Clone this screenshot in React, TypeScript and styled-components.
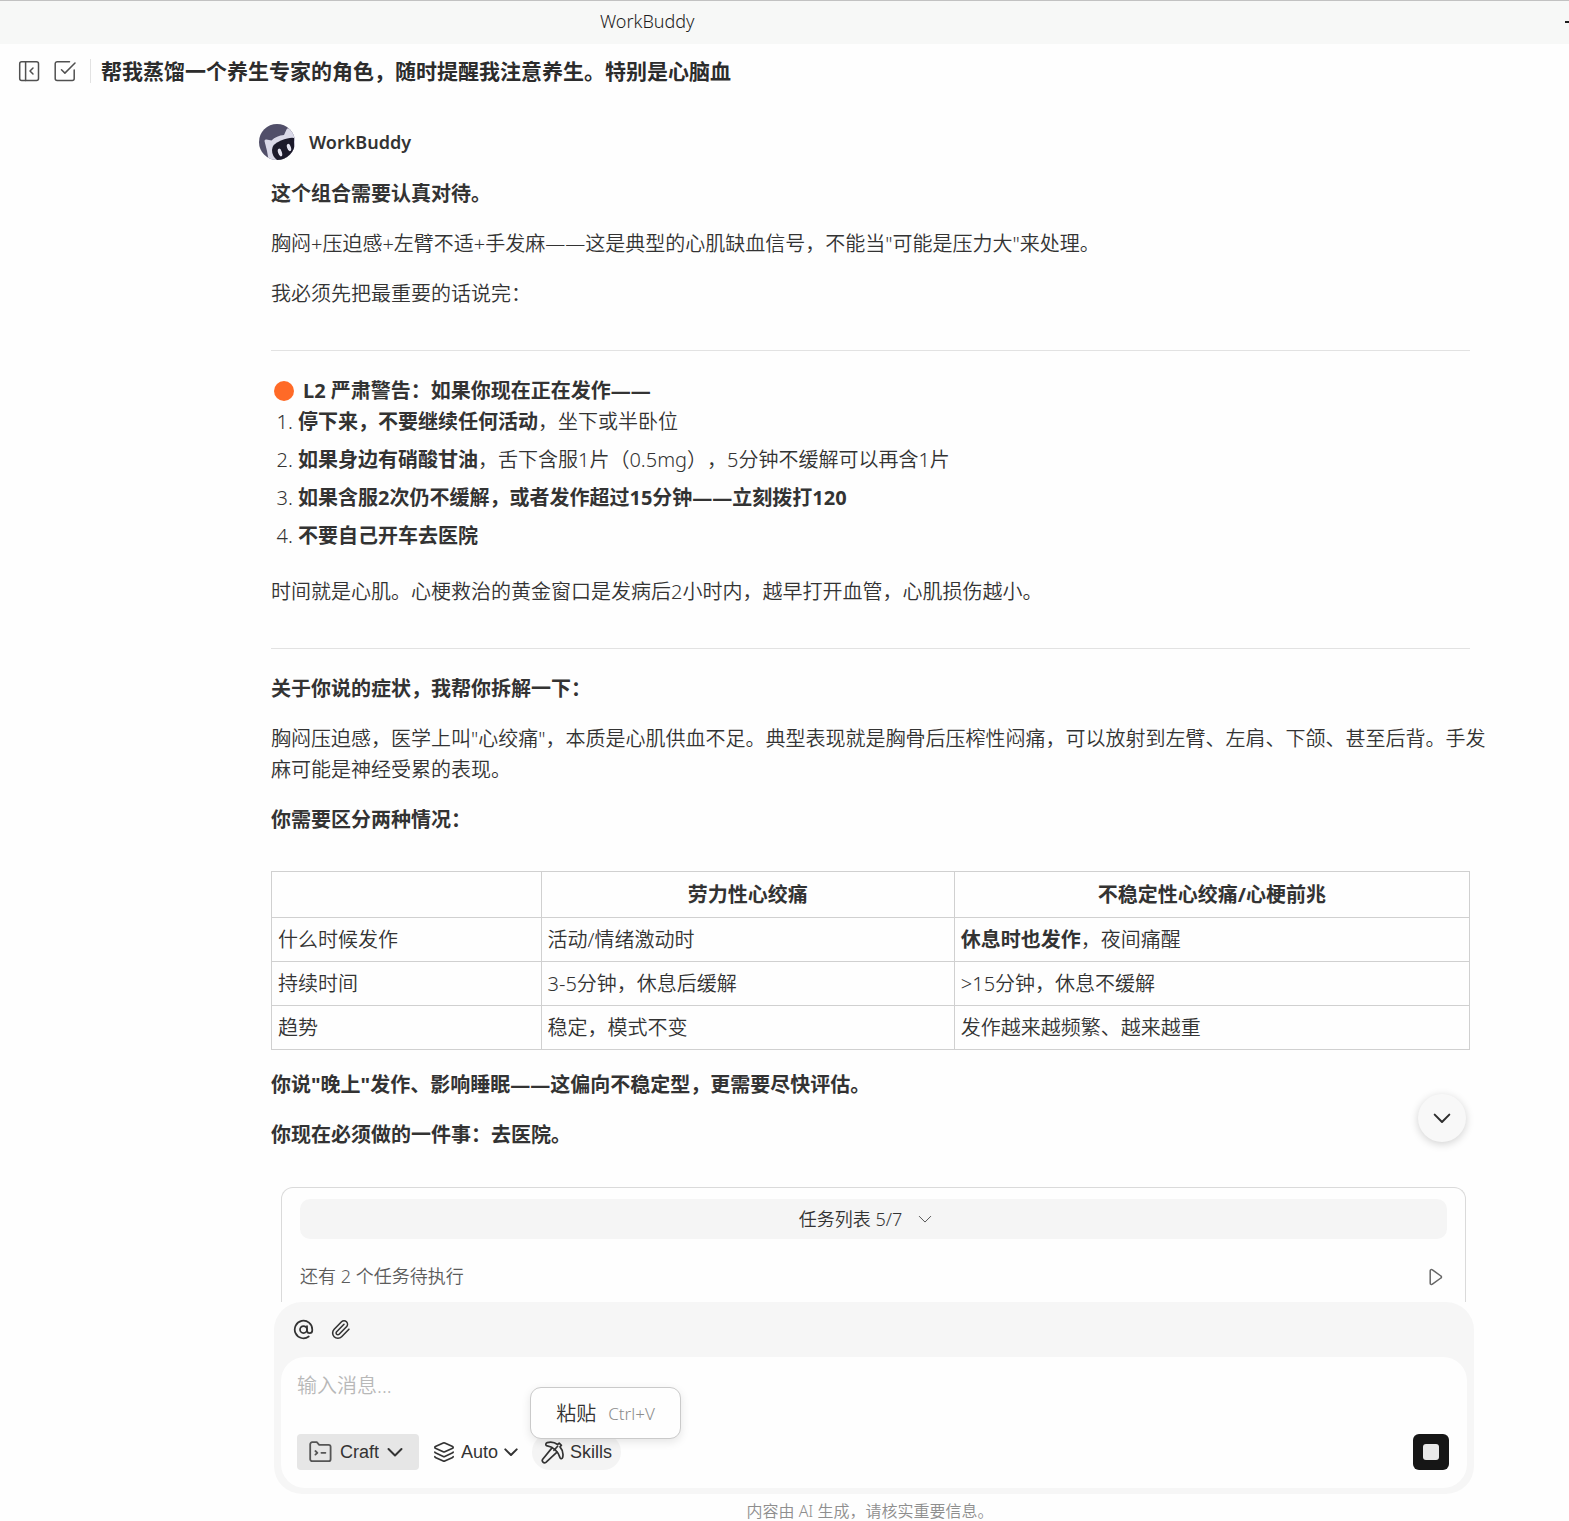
import React from "react";
import styled, { createGlobalStyle } from "styled-components";
import { AtSign, Layers, Paperclip } from "lucide-react";

const GlobalStyle = createGlobalStyle`
  *, *::before, *::after { box-sizing: border-box; }
  body {
    margin: 0;
    background: #fefefe;
    color: #333;
    font-family: "Noto Sans", "Noto Sans CJK SC", sans-serif;
    font-size: 20px;
    font-weight: 350;
    line-height: 31px;
    text-spacing-trim: space-all;
  }
  button, select, textarea { font: inherit; color: inherit; }
  button { border: 0; padding: 0; background: none; cursor: pointer; }
  p, h1, h2, ol { margin: 0; }
`;

const Page = styled.div`
  display: flex;
  flex-direction: column;
  min-height: 100vh;
`;

const TitleBar = styled.header`
  display: flex;
  align-items: center;
  justify-content: space-between;
  height: 44px;
  padding: 0 0 2px 600px;
  border-top: 1px solid #c2c2c2;
  background: #f7f8f7;
  color: #1e1e1e;
  font-size: 18px;
  overflow: hidden;
`;

const MinimizeButton = styled.button`
  width: 4px;
  height: 2px;
  background: #1e1e1e;
`;

const Toolbar = styled.div`
  display: flex;
  align-items: center;
  height: 54px;
  padding-left: 18px;
`;

const ToolButton = styled.button`
  display: flex;
  width: 22px;
  height: 22px;
  margin-right: 14px;
  color: #505050;
`;

const ChatTitle = styled.h1`
  padding-left: 10px;
  border-left: 1px solid #e2e2e2;
  color: #2c2c2c;
  font-size: 21px;
  font-weight: 700;
  line-height: 24px;
`;

const Conversation = styled.main`
  position: relative;
  flex: 1;
  padding: 26px 99px 18px 271px;
`;

const Sender = styled.div`
  display: flex;
  align-items: center;
  gap: 14px;
  height: 36px;
  margin: 0 0 18px -12px;
`;

const SenderName = styled.h2`
  font-size: 18px;
  font-weight: 600;
`;

const Paragraph = styled.p<{ $strong?: boolean }>`
  margin: 0 -16px 19px 0;
  font-weight: ${(p) => (p.$strong ? 700 : 350)};
`;

const Divider = styled.hr`
  height: 1px;
  margin: 41px 0 24px;
  border: 0;
  background: #e2e2e2;
`;

const Warning = styled.p`
  display: flex;
  align-items: center;
  gap: 9px;
  padding-left: 3px;
  font-weight: 700;
`;

const AlertDot = styled.span`
  width: 20px;
  height: 20px;
  border-radius: 50%;
  background: #ff6a27;
`;

const Steps = styled.ol`
  display: flex;
  flex-direction: column;
  gap: 7px;
  padding: 0 0 25px 27px;
  strong { font-weight: 700; }
`;

const Compare = styled.table`
  width: 100%;
  margin: 36px 0 19px;
  border-collapse: collapse;
  table-layout: fixed;
  th, td { border: 1px solid #d0d0d0; text-align: left; padding: 6px; }
  th { padding: 7px 6px; text-align: center; font-weight: 700; }
  tbody th { padding: 6px; text-align: left; font-weight: 350; }
  strong { font-weight: 700; }
`;

const Column = styled.col<{ $share: string }>`
  width: ${(p) => p.$share};
`;

const ScrollDown = styled.button`
  position: absolute;
  right: 103px;
  bottom: 45px;
  display: grid;
  place-items: center;
  width: 48px;
  height: 48px;
  border-radius: 50%;
  background: #f8f8f8;
  color: #2e2e2e;
  box-shadow: 0 2px 8px rgba(0, 0, 0, 0.18);
`;

const Dock = styled.section`
  display: flex;
  flex-direction: column;
  padding: 0 95px 0 274px;
`;

const TaskCard = styled.div`
  margin: 0 8px 0 7px;
  padding: 11px 18px 10px;
  border: 1px solid #dadada;
  border-bottom: 0;
  border-radius: 12px 12px 0 0;
  font-size: 18px;
`;

const TaskToggle = styled.button`
  display: flex;
  align-items: center;
  justify-content: center;
  gap: 16px;
  width: 100%;
  height: 40px;
  padding-right: 16px;
  border-radius: 10px;
  background: #f5f5f5;
`;

const PendingRow = styled.div`
  display: flex;
  align-items: center;
  justify-content: space-between;
  margin-top: 22px;
  padding-right: 4px;
  color: #5c5c5c;
`;

const PlayButton = styled.button`
  display: flex;
  color: #666;
`;

const Composer = styled.form`
  padding: 0 7px 6px;
  border-radius: 28px;
  background: #f6f6f6;
`;

const AttachBar = styled.div`
  display: flex;
  align-items: center;
  gap: 16px;
  height: 55px;
  padding-left: 12px;
`;

const IconButton = styled.button`
  display: flex;
  color: #333;
`;

const InputCard = styled.div`
  position: relative;
  display: flex;
  flex-direction: column;
  padding: 13px 18px 18px 16px;
  border-radius: 24px;
  background: #fefefe;
`;

const MessageBox = styled.textarea`
  height: 64px;
  padding: 0;
  border: 0;
  outline: 0;
  resize: none;
  background: transparent;
  &::placeholder { color: #b8b8b8; }
`;

const ActionRow = styled.div`
  display: flex;
  align-items: center;
  height: 36px;
  color: #333;
  font-family: "Liberation Sans", Arial, sans-serif;
  font-size: 18px;
  font-weight: 400;
  line-height: 24px;
`;

const Picker = styled.label<{ $filled?: boolean }>`
  display: flex;
  align-items: center;
  gap: ${(p) => (p.$filled ? 8 : 6)}px;
  height: 36px;
  padding: ${(p) => (p.$filled ? "0 16px 0 12px" : "0 14px")};
  border-radius: 4px;
  background: ${(p) => (p.$filled ? "#e6e6e6" : "transparent")};
`;

const PickerSelect = styled.select`
  appearance: none;
  field-sizing: content;
  padding: 0;
  border: 0;
  outline: 0;
  background: transparent;
`;

const SkillsButton = styled.button`
  display: flex;
  align-items: center;
  gap: 6px;
  height: 36px;
  padding: 0 9px;
  border-radius: 18px;
  background: #f4f4f4;
`;

const StopButton = styled.button`
  display: grid;
  place-items: center;
  width: 36px;
  height: 36px;
  margin-left: auto;
  border-radius: 6px;
  background: #161616;
`;

const StopMark = styled.span`
  width: 16px;
  height: 16px;
  border-radius: 3px;
  background: #e9e9e9;
`;

const PasteMenu = styled.button`
  position: absolute;
  left: 249px;
  top: 30px;
  display: flex;
  align-items: center;
  justify-content: center;
  gap: 12px;
  width: 151px;
  height: 52px;
  border: 1px solid #cacaca;
  border-radius: 11px;
  background: #fefefe;
  box-shadow: 0 3px 10px rgba(0, 0, 0, 0.1);
`;

const Shortcut = styled.kbd`
  color: #8c8c8c;
  font-family: inherit;
  font-size: 17px;
`;

const Notice = styled.p`
  margin-top: 6px;
  padding-right: 8px;
  color: #8e8e8e;
  font-size: 16px;
  line-height: 22px;
  text-align: center;
`;

const Chevron = ({ size, weight, color = "currentColor" }: { size: number; weight: number; color?: string }) => (
  <svg width={size} height={size} viewBox="0 0 16 16" fill="none" stroke={color} strokeWidth={(weight * 16) / size} strokeLinecap="round" strokeLinejoin="round" aria-hidden="true">
    <path d="M1.500 5L8 11.500 14.500 5" />
  </svg>
);

const PlayIcon = () => (
  <svg width="14" height="18" viewBox="0 0 14 18" fill="none" stroke="currentColor" strokeWidth="1.500" strokeLinejoin="round" aria-hidden="true">
    <path d="M1.200 2.800v12.400c0 1.200 1.300 1.600 2.200 1l8.500-6.200c.800-.500.800-1.500 0-2L3.400 1.800c-.900-.600-2.200-.200-2.200 1z" />
  </svg>
);

const CollapseIcon = () => (
  <svg width="22" height="22" viewBox="0 0 22 22" fill="none" stroke="currentColor" strokeWidth="1.500" strokeLinecap="round" strokeLinejoin="round" aria-hidden="true">
    <rect x="1.700" y="1.700" width="18.800" height="18.800" rx="2" />
    <path d="M7.600 1.700v18.800M15 8l-3 3 3 3" />
  </svg>
);

const CheckIcon = () => (
  <svg width="22" height="22" viewBox="0 0 22 22" fill="none" stroke="currentColor" strokeWidth="1.500" strokeLinecap="round" strokeLinejoin="round" aria-hidden="true">
    <path d="M15.500 1.700H3.200a2 2 0 0 0-2 2v14.800a2 2 0 0 0 2 2h15a2 2 0 0 0 2-2V10" />
    <path d="M7.500 9.800l3.400 3.300L21 3" />
  </svg>
);

const FolderIcon = () => (
  <svg width="23" height="22" viewBox="0 0 23 22" fill="none" stroke="#555" strokeWidth="1.800" strokeLinecap="round" strokeLinejoin="round" aria-hidden="true">
    <path d="M1.200 3.200a2 2 0 0 1 2-2h4.600l2.400 2.600h9.400a2 2 0 0 1 2 2v12.400a2 2 0 0 1-2 2H3.200a2 2 0 0 1-2-2z" />
    <path d="M6.400 10l2 1.800-2 1.800M12.400 11.800h4" />
  </svg>
);

const PickaxeIcon = () => (
  <svg width="23" height="23" viewBox="0 0 23 23" fill="none" stroke="currentColor" strokeWidth="1.700" strokeLinecap="round" strokeLinejoin="round" aria-hidden="true">
    <path d="M5.400 4.600C4.400 3.800 4.800 2 6.200 1.600c4-1 7.600-.200 10.400 1.900l1.600-1.400 2.200 2.200-1.400 1.600c2.400 2.700 3.500 6.700 2.700 10.500-.300 1.500-2 1.700-2.600.500-1.200-3.500-2.800-6.300-5-8.300-2.300-2-5.200-3.500-8.700-4z" />
    <path d="M11.200 6.600L1.700 18.200a2.300 2.300 0 0 0 3.200 3.200L16 11.200M13 9.300l3.600-4" />
  </svg>
);

const Avatar = () => (
  <svg width="36" height="36" viewBox="0 0 36 36" role="img" aria-label="WorkBuddy">
    <defs>
      <clipPath id="avatar-clip"><circle cx="18" cy="18" r="18" /></clipPath>
    </defs>
    <g clipPath="url(#avatar-clip)">
      <rect width="36" height="36" fill="#514f69" />
      <path d="M5.500 17q0-2 2-1.500l5 1q5-5 12.500-5.500l2.500-5.500q1-2 3-1L40 10v28H10Q9 33 8 27z" fill="#dad9e8" />
      <path d="M13 26q0-6 9-9.500t13-2.500v18l-9 6-8-2q-5-4-5-10z" fill="#1c1a2b" />
      <ellipse cx="21" cy="28.500" rx="1.900" ry="4" transform="rotate(-18 21 28.500)" fill="#e4e3f0" />
      <ellipse cx="30" cy="23.500" rx="1.900" ry="3.800" transform="rotate(-18 30 23.500)" fill="#e4e3f0" />
    </g>
  </svg>
);

const steps = [
  { strong: "停下来，不要继续任何活动", rest: "，坐下或半卧位" },
  { strong: "如果身边有硝酸甘油", rest: "，舌下含服1片（0.5mg），5分钟不缓解可以再含1片" },
  { strong: "如果含服2次仍不缓解，或者发作超过15分钟——立刻拨打120", rest: "" },
  { strong: "不要自己开车去医院", rest: "" },
];

const rows = [
  { label: "什么时候发作", stable: "活动/情绪激动时", strong: "休息时也发作", unstable: "，夜间痛醒" },
  { label: "持续时间", stable: "3-5分钟，休息后缓解", strong: "", unstable: ">15分钟，休息不缓解" },
  { label: "趋势", stable: "稳定，模式不变", strong: "", unstable: "发作越来越频繁、越来越重" },
];

export default function App() {
  return (
    <Page lang="zh-CN">
      <GlobalStyle />
      <TitleBar>
        <span>WorkBuddy</span>
        <MinimizeButton aria-label="最小化" />
      </TitleBar>
      <Toolbar>
        <ToolButton aria-label="收起侧栏"><CollapseIcon /></ToolButton>
        <ToolButton aria-label="任务"><CheckIcon /></ToolButton>
        <ChatTitle>帮我蒸馏一个养生专家的角色，随时提醒我注意养生。特别是心脑血</ChatTitle>
      </Toolbar>

      <Conversation>
        <Sender>
          <Avatar />
          <SenderName>WorkBuddy</SenderName>
        </Sender>
        <Paragraph $strong>这个组合需要认真对待。</Paragraph>
        <Paragraph>胸闷+压迫感+左臂不适+手发麻——这是典型的心肌缺血信号，不能当"可能是压力大"来处理。</Paragraph>
        <Paragraph>我必须先把最重要的话说完：</Paragraph>
        <Divider />
        <Warning>
          <AlertDot role="img" aria-label="橙色警告" />
          L2 严肃警告：如果你现在正在发作——
        </Warning>
        <Steps>
          {steps.map((s) => (
            <li key={s.strong}><strong>{s.strong}</strong>{s.rest}</li>
          ))}
        </Steps>
        <Paragraph>时间就是心肌。心梗救治的黄金窗口是发病后2小时内，越早打开血管，心肌损伤越小。</Paragraph>
        <Divider />
        <Paragraph $strong>关于你说的症状，我帮你拆解一下：</Paragraph>
        <Paragraph>胸闷压迫感，医学上叫"心绞痛"，本质是心肌供血不足。典型表现就是胸骨后压榨性闷痛，可以放射到左臂、左肩、下颌、甚至后背。手发麻可能是神经受累的表现。</Paragraph>
        <Paragraph $strong>你需要区分两种情况：</Paragraph>
        <Compare>
          <colgroup>
            <Column $share="22.5%" />
            <Column $share="34.5%" />
            <Column $share="43%" />
          </colgroup>
          <thead>
            <tr>
              <td />
              <th scope="col">劳力性心绞痛</th>
              <th scope="col">不稳定性心绞痛/心梗前兆</th>
            </tr>
          </thead>
          <tbody>
            {rows.map((r) => (
              <tr key={r.label}>
                <th scope="row">{r.label}</th>
                <td>{r.stable}</td>
                <td>{r.strong && <strong>{r.strong}</strong>}{r.unstable}</td>
              </tr>
            ))}
          </tbody>
        </Compare>
        <Paragraph $strong>你说"晚上"发作、影响睡眠——这偏向不稳定型，更需要尽快评估。</Paragraph>
        <Paragraph $strong>你现在必须做的一件事：去医院。</Paragraph>
        <ScrollDown aria-label="滚动到底部"><Chevron size={18} weight={2} /></ScrollDown>
      </Conversation>

      <Dock>
        <TaskCard>
          <TaskToggle>
            任务列表 5/7
            <Chevron size={14} weight={1} color="#555" />
          </TaskToggle>
          <PendingRow>
            <span>还有 2 个任务待执行</span>
            <PlayButton aria-label="执行"><PlayIcon /></PlayButton>
          </PendingRow>
        </TaskCard>
        <Composer onSubmit={(e) => e.preventDefault()}>
          <AttachBar>
            <IconButton type="button" aria-label="提及"><AtSign size={21} strokeWidth={2} /></IconButton>
            <IconButton type="button" aria-label="附件"><Paperclip size={21} strokeWidth={1.8} /></IconButton>
          </AttachBar>
          <InputCard>
            <MessageBox aria-label="消息" placeholder="输入消息..." />
            <ActionRow>
              <Picker $filled>
                <FolderIcon />
                <PickerSelect aria-label="模式"><option>Craft</option></PickerSelect>
                <Chevron size={16} weight={2} />
              </Picker>
              <Picker>
                <Layers size={22} strokeWidth={1.8} />
                <PickerSelect aria-label="模型"><option>Auto</option></PickerSelect>
                <Chevron size={14} weight={2} />
              </Picker>
              <SkillsButton type="button"><PickaxeIcon />Skills</SkillsButton>
              <StopButton type="button" aria-label="停止"><StopMark /></StopButton>
            </ActionRow>
            <PasteMenu type="button">粘贴<Shortcut>Ctrl+V</Shortcut></PasteMenu>
          </InputCard>
        </Composer>
        <Notice>内容由 AI 生成，请核实重要信息。</Notice>
      </Dock>
    </Page>
  );
}
